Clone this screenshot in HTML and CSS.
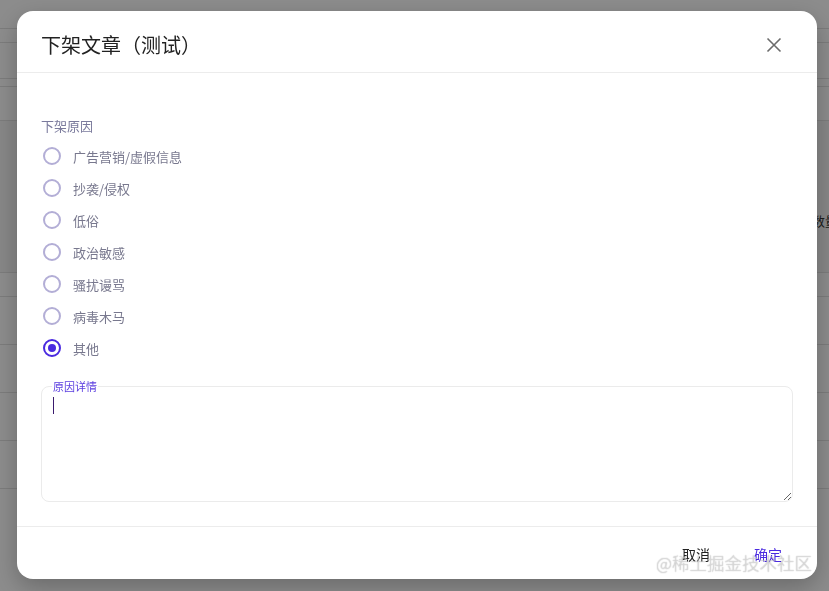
FILE: index.html
```html
<!DOCTYPE html>
<html lang="zh-CN">
<head>
  <meta charset="UTF-8" />
  <meta name="viewport" content="width=device-width, initial-scale=1.0"/>
  <title>下架文章</title>
  <link rel="stylesheet" href="styles.css">
</head>
<body>

  <div class="page">
    <div class="row" style="height: 29px"></div>
    <div class="row" style="height: 14px"></div>
    <div class="row" style="height: 36px"></div>
    <div class="row" style="height: 8px"></div>
    <div class="row" style="height: 34px"></div>
    <div class="row head" style="height: 152px"><span class="head-text">数量</span></div>
    <div class="row" style="height: 24px"></div>
    <div class="row" style="height: 48px"></div>
    <div class="row" style="height: 48px"></div>
    <div class="row" style="height: 48px"></div>
    <div class="row" style="height: 48px"></div>
  </div>

  <div class="mask"></div>

  <div class="dialog">
    <div class="dialog-header">
      <h2 class="dialog-title">下架文章（测试）</h2>
      <button class="close-btn" aria-label="关闭">
        <svg width="16" height="16" viewBox="0 0 16 16">
          <path d="M1.5 1.5 L14.5 14.5 M14.5 1.5 L1.5 14.5" stroke="#6b6b6b" stroke-width="1.6" fill="none"/>
        </svg>
      </button>
    </div>

    <div class="dialog-body">
      <div class="field-label">下架原因</div>
      <div class="radio-group">
        <label class="radio"><span class="ring"></span>广告营销/虚假信息</label>
        <label class="radio"><span class="ring"></span>抄袭/侵权</label>
        <label class="radio"><span class="ring"></span>低俗</label>
        <label class="radio"><span class="ring"></span>政治敏感</label>
        <label class="radio"><span class="ring"></span>骚扰谩骂</label>
        <label class="radio"><span class="ring"></span>病毒木马</label>
        <label class="radio checked"><span class="ring"></span>其他</label>
      </div>

      <div class="textfield">
        <span class="textfield-label">原因详情</span>
        <textarea class="textfield-input"></textarea>
        <span class="caret"></span>
      </div>
    </div>

    <div class="dialog-footer">
      <button class="text-btn">取消</button>
      <button class="text-btn primary">确定</button>
    </div>
  </div>

  <div class="watermark">@稀土掘金技术社区</div>

</body>
</html>
```

FILE: styles.css
```css
* {
  box-sizing: border-box;
}

body {
  margin: 0;
  background: #fff;
  font-family: "Microsoft YaHei", "Noto Sans CJK SC", "Noto Sans", sans-serif;
  overflow: hidden;
}

.page {
  width: 829px;
  height: 591px;
}

.row {
  border-bottom: 1px solid #e2e2e2;
}

.row.head {
  background: #f6f6f6;
  white-space: nowrap;
  overflow: hidden;
  padding: 86px 0 0 812px;
}

.head-text {
  font-size: 13px;
  color: #333;
}

.mask {
  position: fixed;
  inset: 0;
  background: rgba(0, 0, 0, 0.45);
}

.dialog {
  position: fixed;
  left: 17px;
  top: 11px;
  width: 800px;
  height: 568px;
  background: #fff;
  border-radius: 16px;
  box-shadow: 0 8px 24px rgba(0, 0, 0, 0.25);
  display: flex;
  flex-direction: column;
  overflow: hidden;
}

.dialog-header {
  height: 62px;
  display: flex;
  align-items: center;
  justify-content: space-between;
  padding: 6px 35px 0 24px;
  border-bottom: 1px solid #ececec;
}

.dialog-title {
  margin: 0;
  font-size: 20px;
  font-weight: 400;
  color: #222;
}

.close-btn {
  background: none;
  border: none;
  padding: 0;
  width: 16px;
  height: 16px;
  cursor: pointer;
}

.dialog-body {
  flex: 1;
  padding: 43px 24px 24px;
}

.field-label {
  font-size: 13px;
  line-height: 20px;
  color: #7a7a9c;
}

.radio-group {
  display: flex;
  flex-direction: column;
  margin-top: 4px;
}

.radio {
  height: 32px;
  display: flex;
  align-items: center;
  gap: 12px;
  padding-left: 2px;
  font-size: 13px;
  color: #78788e;
  cursor: pointer;
}

.ring {
  width: 18px;
  height: 18px;
  border: 2px solid #b3aed6;
  border-radius: 50%;
  display: flex;
  align-items: center;
  justify-content: center;
}

.radio.checked .ring {
  border-color: #4a2ae0;
}

.radio.checked .ring::after {
  content: "";
  width: 8px;
  height: 8px;
  border-radius: 50%;
  background: #4a2ae0;
}

.textfield {
  position: relative;
  margin-top: 22px;
  height: 116px;
}

.textfield-input {
  width: 100%;
  height: 100%;
  border: 1px solid #ebebeb;
  border-radius: 8px;
  resize: vertical;
  outline: none;
  font-family: inherit;
  font-size: 13px;
  padding: 10px 12px;
}

.textfield-label {
  position: absolute;
  left: 11px;
  top: -7px;
  padding: 0 1px;
  background: #fff;
  font-size: 11px;
  line-height: 14px;
  color: #5a3de0;
}

.caret {
  position: absolute;
  left: 12px;
  top: 11px;
  width: 1px;
  height: 17px;
  background: #3a1a6e;
}

.dialog-footer {
  height: 53px;
  border-top: 1px solid #ececec;
  display: flex;
  align-items: center;
  justify-content: flex-end;
  gap: 28px;
  padding: 1px 27px 0 0;
}

.text-btn {
  background: none;
  border: none;
  padding: 4px 8px;
  font-family: inherit;
  font-size: 14px;
  color: #222;
  cursor: pointer;
}

.text-btn.primary {
  color: #4a2ae0;
}

.watermark {
  position: fixed;
  right: 17px;
  top: 549px;
  font-size: 17.5px;
  font-weight: 300;
  line-height: 28px;
  color: rgba(255, 255, 255, 0.6);
  text-shadow: 0 0 1px rgba(0, 0, 0, 0.45);
  pointer-events: none;
}
```
